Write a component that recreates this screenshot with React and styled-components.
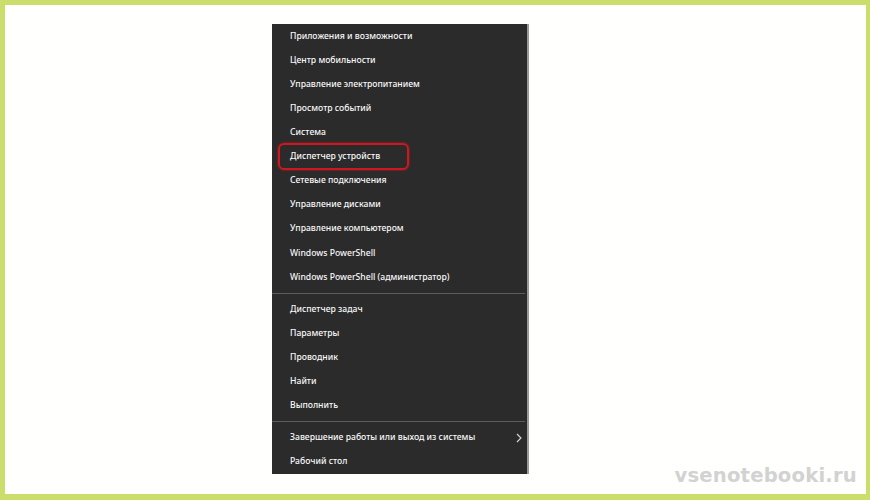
import React from "react";
import styled, { createGlobalStyle } from "styled-components";

const Global = createGlobalStyle`
  html, body { margin: 0; padding: 0; background: #ffffff; }
  body { font-family: "Noto Sans", "DejaVu Sans", sans-serif; }
`;

const Frame = styled.div`
  box-sizing: border-box;
  width: 870px;
  height: 500px;
  border-style: solid;
  border-color: #cbdd6a;
  border-width: 5px 4px 6px 5px;
  background: #fffffd;
  display: grid;
  grid-template-columns: 267px 259px 1fr;
  padding-top: 19px;
  overflow: hidden;
`;

const Menu = styled.div`
  grid-column: 2;
  align-self: start;
  width: 257px;
  height: 450px;
  box-sizing: border-box;
  background: #2b2b2b;
  border-right: 2px solid #9a9a9a;
  display: flex;
  flex-direction: column;
`;

const Item = styled.div`
  position: relative;
  height: 24.2px;
  display: flex;
  align-items: center;
  padding-left: 18px;
  padding-bottom: 1px;
  box-sizing: border-box;
  color: #f8f8f8;
  font-family: "Noto Sans", sans-serif;
  font-size: 8.65px;
  font-weight: 500;
  white-space: nowrap;
`;

const Highlight = styled.span`
  position: absolute;
  left: 6px;
  top: -2px;
  width: 131px;
  height: 27px;
  box-sizing: border-box;
  border: 2.5px solid #cc1820;
  border-radius: 6px;
  box-shadow: 0 0 3px rgba(210, 30, 36, 0.7);
  pointer-events: none;
`;

const Separator = styled.div`
  height: 8px;
  display: flex;
  align-items: center;
  padding: 0 2px 0 0;
  &::after {
    content: "";
    display: block;
    width: 100%;
    height: 1px;
    background: #5c5c5c;
  }
`;

const Chevron = styled.svg`
  position: absolute;
  right: 5px;
  top: 7px;
`;

const Watermark = styled.div`
  grid-column: 3;
  align-self: end;
  justify-self: end;
  margin: 0 9px 7px 0;
  font-family: "DejaVu Sans", sans-serif;
  font-weight: bold;
  font-size: 19.6px;
  color: #d2d2d2;
  letter-spacing: 0.2px;
`;

const group1 = [
  "Приложения и возможности",
  "Центр мобильности",
  "Управление электропитанием",
  "Просмотр событий",
  "Система",
  "Диспетчер устройств",
  "Сетевые подключения",
  "Управление дисками",
  "Управление компьютером",
  "Windows PowerShell",
  "Windows PowerShell (администратор)",
];

const group2 = ["Диспетчер задач", "Параметры", "Проводник", "Найти", "Выполнить"];

export default function App() {
  return (
    <>
      <Global />
      <Frame>
        <Menu>
          {group1.map((t) => (
            <Item key={t}>
              {t}
              {t === "Диспетчер устройств" && <Highlight />}
            </Item>
          ))}
          <Separator />
          {group2.map((t) => (
            <Item key={t}>{t}</Item>
          ))}
          <Separator />
          <Item>
            Завершение работы или выход из системы
            <Chevron width="6" height="10" viewBox="0 0 6 10">
              <path d="M1 1 L5 5 L1 9" fill="none" stroke="#d8d8d8" strokeWidth="1.1" />
            </Chevron>
          </Item>
          <Item>Рабочий стол</Item>
        </Menu>
        <Watermark>vsenotebooki.ru</Watermark>
      </Frame>
    </>
  );
}
